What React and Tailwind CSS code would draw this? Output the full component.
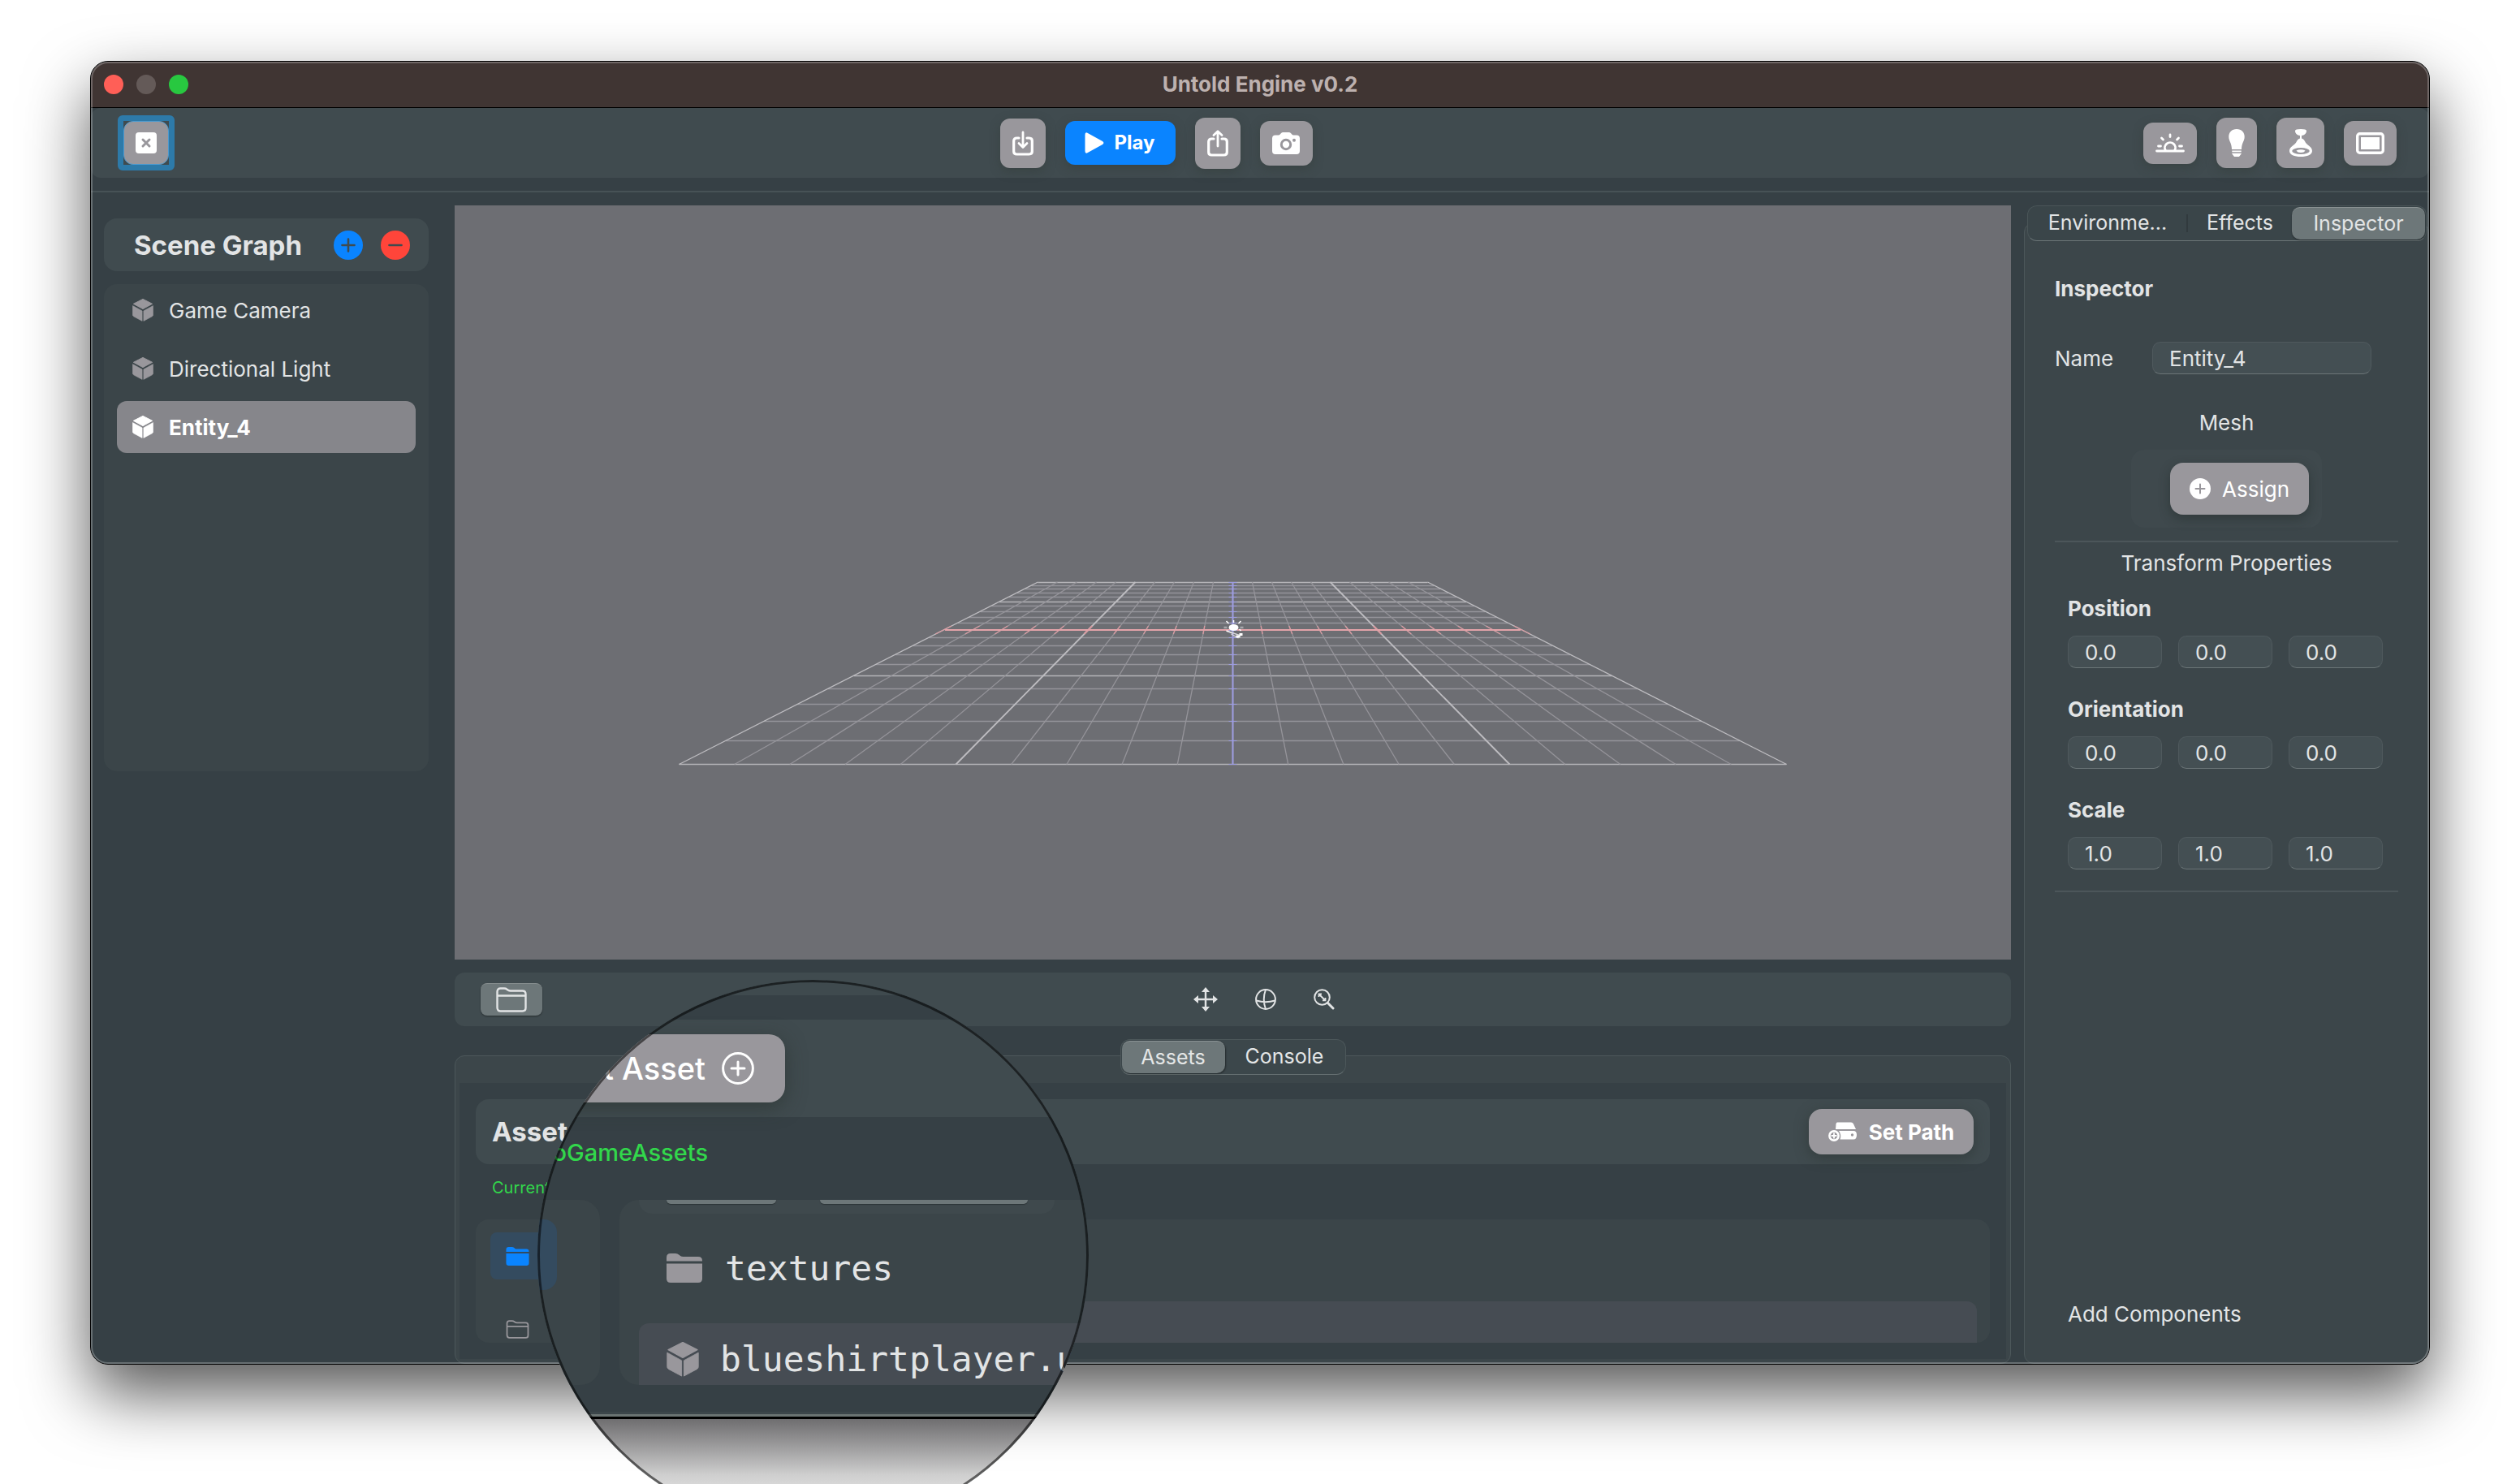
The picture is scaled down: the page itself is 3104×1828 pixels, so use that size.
import React from "react";

const GRID_ROWS = [
  464, 468, 472, 477, 482, 488, 493, 500, 507, 514, 523, 532, 542, 553, 565, 579, 595, 614, 635, 659, 688,
];

function gridHalfWidth(y) {
  return 240 + ((y - 464) / 224) * 442;
}

function Cube({ className }) {
  return (
    <svg viewBox="0 0 26 28" className={className} fill="currentColor" aria-hidden="true">
      <path d="M13 0.4 24.6 6.3 13 12.6 1.4 6.3Z" strokeWidth="1" stroke="currentColor" strokeLinejoin="round" />
      <path d="M0.5 8.6 12.1 14.9V27.4L1.6 21.8Q0.5 21.2 0.5 20Z" strokeWidth="0.6" stroke="currentColor" strokeLinejoin="round" />
      <path d="M25.5 8.6 13.9 14.9V27.4L24.4 21.8Q25.5 21.2 25.5 20Z" strokeWidth="0.6" stroke="currentColor" strokeLinejoin="round" />
    </svg>
  );
}

function FolderFill({ className }) {
  return (
    <svg viewBox="0 0 44 36" className={className} fill="currentColor" aria-hidden="true">
      <path d="M0 9.500V5Q0 0 5 0H11Q13.500 0 15.500 1.700L17 3Q18.500 4 20.500 4H39Q44 4 44 9V9.500Z" />
      <path d="M0 12.500H44V31Q44 36 39 36H5Q0 36 0 31Z" />
    </svg>
  );
}

function FolderLine({ className }) {
  return (
    <svg viewBox="0 0 38 31" className={className} fill="none" stroke="currentColor" strokeWidth="2.400" aria-hidden="true">
      <path d="M1.500 25V5.500Q1.500 1.500 5.500 1.500H10Q12 1.500 13.500 2.700L15 3.800Q16 4.500 18 4.500H32.500Q36.500 4.500 36.500 8.500V25.500Q36.500 29.500 32.500 29.500H5.500Q1.500 29.500 1.500 25Z" />
      <path d="M1.500 10.500H36.500" />
    </svg>
  );
}

function ToolButton({ label, className, children }) {
  return (
    <button
      type="button"
      aria-label={label}
      className={
        "flex items-center justify-center rounded-xl bg-[#99979c] text-white shadow-[0_4px_12px_rgba(50,60,55,0.5)] " + className
      }
    >
      {children}
    </button>
  );
}

function TopBar() {
  return (
    <div className="flex h-[86px] items-center justify-between rounded-xl bg-[#404b4f] px-10">
      <div className="mx-[-7px] rounded-md border-[7px] border-[#2d7aa9]">
        <button
          type="button"
          aria-label="Close project"
          className="flex h-[54px] w-14 items-center justify-center rounded-xl border border-[#4b9ad0] bg-[#99979c]"
        >
          <svg viewBox="0 0 26 26" className="size-[26px]" aria-hidden="true">
            <rect width="26" height="26" rx="4" fill="#fff" />
            <path d="M9 9 17 17M17 9 9 17" stroke="#99979c" strokeWidth="3" strokeLinecap="round" />
          </svg>
        </button>
      </div>

      <div className="flex items-center gap-6">
        <ToolButton label="Import" className="h-[61px] w-14">
          <svg viewBox="0 0 26 31" className="h-[31px] w-[26px]" fill="none" stroke="currentColor" strokeWidth="3.200" strokeLinecap="round" strokeLinejoin="round" aria-hidden="true">
            <path d="M8 9H5.500Q1.700 9 1.700 12.500V25.500Q1.700 29 5.500 29H20.500Q24.300 29 24.300 25.500V12.500Q24.300 9 20.500 9H18" />
            <path d="M13 2V19.500M8 15.500 13 20.500 18 15.500" strokeWidth="2.800" />
          </svg>
        </ToolButton>
        <button
          type="button"
          className="flex h-[54px] w-[136px] items-center justify-center gap-3 rounded-xl bg-[#0a84ff] text-2xl font-bold text-white shadow-[0_4px_12px_rgba(50,60,55,0.5)]"
        >
          <svg viewBox="0 0 23 26" className="h-[26px] w-[24px]" fill="currentColor" aria-hidden="true">
            <path d="M0 3Q0 -0.800 3.400 0.900L21.500 11Q24.300 13 21.500 15L3.400 25.100Q0 26.800 0 23Z" />
          </svg>
          Play
        </button>
        <ToolButton label="Export" className="h-[63px] w-14">
          <svg viewBox="0 0 26 33" className="h-[33px] w-[26px]" fill="none" stroke="currentColor" strokeWidth="3.200" strokeLinecap="round" strokeLinejoin="round" aria-hidden="true">
            <path d="M8 11H5.500Q1.700 11 1.700 14.500V27.500Q1.700 31 5.500 31H20.500Q24.300 31 24.300 27.500V14.500Q24.300 11 20.500 11H18" />
            <path d="M13 20V2.500M8 6.500 13 1.800 18 6.500" strokeWidth="2.800" />
          </svg>
        </ToolButton>
        <ToolButton label="Camera" className="h-[55px] w-[65px]">
          <svg viewBox="0 0 34 27" className="h-[27px] w-[34px]" aria-hidden="true">
            <path d="M4 3.500H7.500Q9 3.500 10 2.300L10.800 1.300Q12 0 13.500 0H20.500Q22 0 23.200 1.300L24 2.300Q25 3.500 26.500 3.500H30Q34 3.500 34 7.500V23Q34 27 30 27H4Q0 27 0 23V7.500Q0 3.500 4 3.500Z" fill="#fff" />
            <circle cx="17" cy="15" r="5.700" fill="none" stroke="#99979c" strokeWidth="3" />
            <circle cx="27" cy="9.800" r="2" fill="#99979c" />
          </svg>
        </ToolButton>
      </div>

      <div className="flex items-center gap-6">
        <ToolButton label="Directional light" className="h-[51px] w-[66px]">
          <svg viewBox="0 0 36 24" className="h-6 w-9" fill="none" stroke="currentColor" strokeWidth="2.800" strokeLinecap="round" aria-hidden="true">
            <path d="M1.500 22H34.500" />
            <path d="M12.500 21.500A6.500 6.500 0 1 1 23.500 21.500" />
            <path d="M18 2V4.500M7.500 6 9.500 8M28.500 6 26.500 8M3.500 16H6.500M29.500 16H32.500" />
          </svg>
        </ToolButton>
        <ToolButton label="Point light" className="h-[62px] w-[50px]">
          <svg viewBox="0 0 20 34" className="h-[34px] w-5" fill="currentColor" aria-hidden="true">
            <path d="M10 0C4 0 0.300 4 0.300 9.500C0.300 15 4 17 4 25H16C16 17 19.700 15 19.700 9.500C19.700 4 16 0 10 0Z" />
            <path d="M4.300 26.500H15.700V28.200H4.300ZM4.300 29.700H15.700V30.500L13 34H7L4.300 30.500Z" />
          </svg>
        </ToolButton>
        <ToolButton label="Spot light" className="h-[62px] w-[59px]">
          <svg viewBox="0 0 28 34" className="h-[34px] w-7" fill="currentColor" aria-hidden="true">
            <path d="M7 2Q7 0 14 0Q21 0 21 2C21 6 18 7.500 15 8V11.500C17 12 18 13 19 15C21 20 28 21 28 27C28 31.500 22 34 14 34C6 34 0 31.500 0 27C0 21 7 20 9 15C10 13 11 12 13 11.500V8C10 7.500 7 6 7 2Z" />
            <ellipse cx="14" cy="27" rx="10.800" ry="4" fill="#99979c" />
            <path d="M8.500 26.500Q14 24 19.500 26.500Q18 29 14 29Q10 29 8.500 26.500Z" />
          </svg>
        </ToolButton>
        <ToolButton label="Area light" className="h-[55px] w-[65px]">
          <svg viewBox="0 0 35 27" className="h-[27px] w-[35px]" aria-hidden="true">
            <rect x="1.700" y="1.700" width="31.600" height="23.600" rx="3" fill="none" stroke="#fff" strokeWidth="3.400" />
            <rect x="6" y="6" width="23" height="15" fill="#fff" />
          </svg>
        </ToolButton>
      </div>
    </div>
  );
}

function SceneGraph() {
  const entities = ["Game Camera", "Directional Light", "Entity_4"];
  return (
    <aside className="flex w-[448px] shrink-0 flex-col gap-4 pt-8 pr-8 pl-4">
      <div className="flex h-[65px] shrink-0 items-center rounded-2xl bg-[#404b4f] pr-[23px] pl-[37px]">
        <h2 className="grow text-[33px] leading-10 font-bold whitespace-nowrap text-[#e2e4e5]">Scene Graph</h2>
        <div className="flex gap-[22px]">
          <button type="button" aria-label="Add entity" className="size-9 rounded-full bg-[#0a84ff]">
            <svg viewBox="0 0 36 36" stroke="#404b4f" strokeWidth="2.600" strokeLinecap="round" aria-hidden="true">
              <path d="M10.500 18H25.500M18 10.500V25.500" />
            </svg>
          </button>
          <button type="button" aria-label="Remove entity" className="size-9 rounded-full bg-[#ff453a]">
            <svg viewBox="0 0 36 36" stroke="#404b4f" strokeWidth="2.600" strokeLinecap="round" aria-hidden="true">
              <path d="M10.500 18H25.500" />
            </svg>
          </button>
        </div>
      </div>
      <ul className="flex h-[600px] flex-col gap-2 rounded-2xl bg-[#3b4549] px-4">
        {entities.map((name) => (
          <li key={name}>
            <button
              type="button"
              className={
                name === "Entity_4"
                  ? "flex h-16 w-full items-center gap-[19px] rounded-xl bg-[#86868b] px-[19px] text-[26px] font-bold text-white"
                  : "flex h-16 w-full items-center gap-[19px] rounded-xl px-[19px] text-[26px] text-[#e2e4e5]"
              }
            >
              <Cube className={name === "Entity_4" ? "h-7 w-[26px] text-white" : "h-7 w-[26px] text-[#99979c]"} />
              {name}
            </button>
          </li>
        ))}
      </ul>
    </aside>
  );
}

function Viewport() {
  const cx = 958;
  return (
    <div className="min-h-0 grow bg-[#6d6e73]">
      <svg viewBox="0 0 1916 929" className="h-full w-full" fill="none" stroke="#98979c" strokeWidth="1.400" role="img" aria-label="Scene viewport">
        {GRID_ROWS.map((y, i) => {
          const half = gridHalfWidth(y);
          const major = i === 0 || i === 5 || i === 15 || i === 20;
          return (
            <line key={y} x1={cx - half} x2={cx + half} y1={y + 0.5} y2={y + 0.5} stroke={i === 10 ? "none" : major ? "#b5b4b8" : "#95949a"} />
          );
        })}
        {GRID_ROWS.map((_, i) => {
          const t = (i - 10) / 10;
          const edge = i === 0 || i === 20;
          const major = i === 5 || i === 15;
          return (
            <g key={i} stroke={edge || major ? "#bdbcc0" : "#95949a"} strokeWidth={major ? 1.9 : 1.3}>
              <line x1={cx + t * 240} y1="464" x2={cx + t * 682} y2="688.500" />
              {i !== 10 && (
                <line x1={cx + t * gridHalfWidth(518)} y1="518" x2={cx + t * gridHalfWidth(528)} y2="528" stroke="#d99ba1" />
              )}
            </g>
          );
        })}
        <line x1={cx - gridHalfWidth(522)} x2={cx + gridHalfWidth(522)} y1="523" y2="523" stroke="#e3a3a9" strokeWidth="2" />
        <line x1={cx} x2={cx} y1="464" y2="689" stroke="#9d9ce0" strokeWidth="2" />
        {GRID_ROWS.map((y) => (
          <line key={y} x1={cx - 5} x2={cx + 5} y1={y + 0.5} y2={y + 0.5} stroke="#9d9ce0" strokeWidth="1" />
        ))}
        <ellipse cx={cx + 1} cy="520" rx="6" ry="4" fill="#fff" stroke="none" />
        <path d="M959 514V511M953 515 950 512M965 515 968 512M950 524 958 527M968 524 966 522" stroke="#fff" strokeWidth="1.600" />
        <path d="M951 520H947M967 520H971" stroke="#a8a8ac" strokeWidth="2.400" />
        <path d="M953 525 968 530M956 528 965 533" stroke="#d9d9dc" strokeWidth="1.400" />
        <path d="M962 531H967M966 528.500H970" stroke="#fff" strokeWidth="3" />
      </svg>
    </div>
  );
}

function GizmoBar() {
  return (
    <div className="flex h-[66px] shrink-0 items-center rounded-xl bg-[#404b4f] px-8 text-[#e2e4e5]">
      <button
        type="button"
        aria-label="Assets folder"
        className="flex h-10 w-[76px] items-center justify-center rounded-lg border-t border-[#858d8e] bg-[#6d7779] shadow-[0_1px_2px_rgba(0,0,0,0.4)]"
      >
        <FolderLine className="h-[31px] w-[38px]" />
      </button>
      <div className="flex grow items-center justify-center gap-[46px]">
        <button type="button" aria-label="Move">
          <svg viewBox="0 0 30 30" className="size-[30px]" fill="currentColor" aria-hidden="true">
            <path d="M15 4V26M4 15H26" stroke="currentColor" strokeWidth="2.400" />
            <path d="M15 0 20 6H10ZM15 30 10 24H20ZM0 15 6 10V20ZM30 15 24 20V10Z" />
          </svg>
        </button>
        <button type="button" aria-label="Rotate">
          <svg viewBox="0 0 26 26" className="size-[26px]" fill="none" stroke="currentColor" strokeWidth="2" aria-hidden="true">
            <circle cx="13" cy="13" r="11.900" />
            <path d="M13 1Q8.500 13 13 25M1.500 14.500Q13 18 24.500 14.500" />
          </svg>
        </button>
        <button type="button" aria-label="Scale">
          <svg viewBox="0 0 26 26" className="size-[26px]" fill="none" stroke="currentColor" strokeWidth="2" aria-hidden="true">
            <circle cx="10.500" cy="10.500" r="9.300" />
            <path d="M17.300 17.300 24 24" strokeWidth="3" strokeLinecap="round" />
            <path d="M7.500 7.500 13.500 13.500M6.500 10V6.500H10M11 14.300H14.500V11" strokeWidth="1.800" />
          </svg>
        </button>
      </div>
    </div>
  );
}

function BottomTabs() {
  return (
    <div role="tablist" className="relative z-10 mb-[-24px] flex h-11 w-[278px] shrink-0 self-center rounded-xl border border-[#4c575a] border-b-[#667072] bg-[#3c474b] p-px text-[25px] text-[#e4e6e6]">
      <button type="button" role="tab" aria-selected="true" className="w-[127px] rounded-[10px] border-t border-[#8b9394] bg-[#6d7779] shadow-[1px_1px_2px_rgba(0,0,0,0.4)]">
        Assets
      </button>
      <button type="button" role="tab" aria-selected="false" className="grow">
        Console
      </button>
    </div>
  );
}

function AssetsPanel() {
  return (
    <section className="shrink-0 rounded-xl border border-[#4c575a] bg-[#3c464a] px-[5px] pt-[33px] pb-[5px]">
      <div className="bg-[#364045] px-5 py-5">
        <div className="flex h-20 items-center justify-between rounded-2xl bg-[#404b4f] px-5">
          <h2 className="text-[33px] leading-10 font-bold text-[#e2e4e5]">Assets</h2>
          <button
            type="button"
            className="flex h-14 w-[203px] items-center justify-center gap-[15px] rounded-2xl bg-[#99979c] text-[26px] font-bold text-white shadow-[0_4px_16px_rgba(40,50,45,0.55)]"
          >
            <svg viewBox="0 0 35 24" className="h-6 w-[35px]" fill="currentColor" aria-hidden="true">
              <path d="M11 0.500H28Q30 0.500 31 2.500L34 9H9L9.500 2.500Q10 0.500 11 0.500Z" />
              <path d="M13 11H31Q35 11 35 16Q35 21.500 31 21.500H14.500Q16.500 15.500 13 11Z" />
              <circle cx="29.500" cy="16" r="1.700" fill="#99979c" />
              <circle cx="7" cy="17" r="5.600" fill="none" stroke="currentColor" strokeWidth="2.600" />
              <path d="M7 13.500V20.500M3.500 17H10.500" stroke="currentColor" strokeWidth="1.800" />
            </svg>
            Set Path
          </button>
        </div>
        <p className="mt-[15px] px-5 text-xl leading-7 text-[#32d74b]">Current</p>
        <div className="mt-[25px] flex h-[152px] gap-4">
          <div className="w-40 overflow-hidden rounded-2xl bg-[#3b4549] px-[18px] pt-4">
            <div className="flex h-[58px] items-center rounded-lg bg-[#344b5f] px-[19px]">
              <FolderFill className="h-[23px] w-[29px] text-[#0a84ff]" />
            </div>
            <div className="mt-8 flex h-[58px] items-center px-[19px]">
              <FolderLine className="h-[23px] w-[29px] text-[#99979c]" />
            </div>
          </div>
          <div className="grow overflow-hidden rounded-2xl bg-[#3b4549] px-4 pt-[101px]">
            <div className="h-20 rounded-t-xl bg-[#464c53]" />
          </div>
        </div>
      </div>
    </section>
  );
}

function VectorField({ label, value }) {
  return (
    <fieldset className="mb-[35px] px-4">
      <legend className="leading-8 font-bold">{label}</legend>
      <div className="mt-[17px] flex gap-5">
        {["X", "Y", "Z"].map((axis) => (
          <input
            key={axis}
            aria-label={label + " " + axis}
            defaultValue={value}
            className="h-10 w-[116px] rounded-[10px] border border-[#4f595d] border-b-[#6b7577] bg-[#444f53] px-5"
          />
        ))}
      </div>
    </fieldset>
  );
}

function Inspector() {
  return (
    <aside className="ml-4 flex w-[499px] shrink-0 flex-col pt-4 text-[26px] text-[#e2e4e5]">
      <div role="tablist" className="relative z-10 mr-[3px] mb-[-23px] ml-1 flex h-11 shrink-0 items-stretch rounded-xl border border-[#4a5558] border-b-[#6b7577] bg-[#3a4549] p-px text-[25px]">
        <button type="button" role="tab" aria-selected="false" className="w-[194px] truncate">
          Environme...
        </button>
        <span className="my-[9px] w-0.5 bg-[#313a3e]" />
        <button type="button" role="tab" aria-selected="false" className="grow">
          Effects
        </button>
        <button type="button" role="tab" aria-selected="true" className="w-[164px] rounded-[10px] border-t border-[#8b9394] bg-[#6d7779] shadow-[0_1px_2px_rgba(0,0,0,0.4)]">
          Inspector
        </button>
      </div>
      <section className="flex grow flex-col rounded-xl border border-[#4c575a] bg-[#3c464a] px-[37px] pt-[65px] pb-11">
        <h2 className="leading-8 font-bold">Inspector</h2>
        <div className="mt-[49px] flex items-center">
          <label htmlFor="entity-name" className="w-[120px]">
            Name
          </label>
          <input
            id="entity-name"
            defaultValue="Entity_4"
            className="h-10 w-[270px] rounded-[10px] border border-[#4f595d] border-b-[#6b7577] bg-[#444f53] px-5"
          />
        </div>
        <p className="mt-11 text-center leading-8">Mesh</p>
        <div className="mt-[17px] self-center rounded-2xl bg-[#3f494d] py-4 pr-4 pl-12">
          <button
            type="button"
            className="flex h-16 w-[171px] items-center justify-center gap-3.5 rounded-2xl bg-[#99979c] text-white shadow-[0_5px_14px_rgba(30,40,38,0.45)]"
          >
            <svg viewBox="0 0 26 26" className="size-[26px]" aria-hidden="true">
              <circle cx="13" cy="13" r="13" fill="#fff" />
              <path d="M7.500 13H18.500M13 7.500V18.500" stroke="#99979c" strokeWidth="2" strokeLinecap="round" />
            </svg>
            Assign
          </button>
        </div>
        <hr className="mt-4 border-t-2 border-[#4c565a]" />
        <p className="mt-2.5 mb-6 text-center leading-8">Transform Properties</p>
        <VectorField label="Position" value="0.0" />
        <VectorField label="Orientation" value="0.0" />
        <VectorField label="Scale" value="1.0" />
        <hr className="mt-[-9px] border-t-2 border-[#4c565a]" />
        <button type="button" className="mt-auto self-start px-4 leading-8">
          Add Components
        </button>
      </section>
    </aside>
  );
}

function Magnifier() {
  return (
    <div className="absolute top-[1207px] left-[662px] flex size-[679px] flex-col overflow-hidden rounded-full bg-[#364045]">
      <div className="h-[19px] shrink-0 bg-[#3f4a4e]" />
      <div className="mt-[30px] flex h-[120px] shrink-0 items-center bg-[#404b4f]">
        <button
          type="button"
          className="flex h-[84px] w-[305px] items-center justify-end gap-5 rounded-[20px] bg-[#99979c] pr-[38px] text-[38px] font-medium whitespace-nowrap text-white shadow-[0_6px_24px_rgba(40,50,45,0.6)]"
        >
          Import Asset
          <svg viewBox="0 0 40 40" className="size-10 shrink-0" fill="none" stroke="currentColor" strokeWidth="3" strokeLinecap="round" aria-hidden="true">
            <circle cx="20" cy="20" r="18.400" />
            <path d="M12 20H28M20 12V28" />
          </svg>
        </button>
      </div>
      <p className="mt-6 w-[210px] shrink-0 text-right text-[29px] leading-10 font-medium whitespace-nowrap text-[#32d74b]">oGameAssets</p>
      <div className="mt-[38px] flex h-[228px] shrink-0 gap-6">
        <div className="w-[77px] shrink-0 rounded-r-3xl bg-[#3b4549] pt-6">
          <div className="h-[87px] w-6 rounded-r-2xl bg-[#344b5f]" />
        </div>
        <div className="grow overflow-hidden rounded-l-3xl bg-[#3b4549] pl-6 font-['DejaVu_Sans_Mono',monospace] text-[43px] text-[#e2e4e5]">
          <div className="flex h-[17px] w-[512px] items-start gap-[54px] rounded-b-2xl bg-[#3f494d] pl-[34px]">
            <div className="h-[5px] w-[135px] rounded-b-lg bg-[#6d7779] shadow-[0_1px_1px_#2c3437]" />
            <div className="h-[5px] w-[256px] rounded-b-lg bg-[#6d7779] shadow-[0_1px_1px_#2c3437]" />
          </div>
          <div className="mt-[23px] flex h-[88px] items-center gap-7 pl-[34px]">
            <FolderFill className="h-9 w-11 text-[#99979c]" />
            textures
          </div>
          <div className="mt-6 flex h-[88px] items-center gap-[26px] rounded-t-xl bg-[#464c53] pl-[34px]">
            <Cube className="h-[43px] w-10 shrink-0 text-[#99979c]" />
            blueshirtplayer.usdc
          </div>
        </div>
      </div>
      <div className="mt-[33px] h-[3px] shrink-0 bg-[#3c464a]" />
      <div className="h-[3px] shrink-0 bg-[#6b7473]" />
      <div className="h-[3px] shrink-0 bg-black" />
      <div className="grow bg-linear-to-b from-[#6f6e70] via-[#cfcfcf] to-white" />
      <div className="absolute inset-0 rounded-full border-[3px] border-black/55" />
    </div>
  );
}

export default function App() {
  return (
    <div className="relative flex h-screen flex-col overflow-hidden bg-white px-[111px] pt-[75px] pb-[147px] font-['Inter',sans-serif]">
      <div className="relative flex min-h-0 grow flex-col rounded-[22px] shadow-[0_36px_80px_rgba(0,0,0,0.66)]">
        <div className="flex min-h-0 grow flex-col overflow-hidden rounded-[22px] border border-black bg-[#364045]">
          <header className="grid h-[57px] shrink-0 grid-cols-[1fr_auto_1fr] items-center border-b border-black bg-[#403533]">
            <div className="flex gap-4 pl-4">
              <button type="button" aria-label="Close" className="size-6 rounded-full bg-[#ff5f57]" />
              <button type="button" aria-label="Minimize" className="size-6 rounded-full bg-[#645a58]" />
              <button type="button" aria-label="Zoom" className="size-6 rounded-full bg-[#28c840]" />
            </div>
            <h1 className="text-[26px] leading-8 font-bold text-[#bdb1af]">Untold Engine v0.2</h1>
          </header>
          <div className="shrink-0">
            <TopBar />
            <div className="mt-4 h-0.5 bg-[#475256]" />
          </div>
          <main className="flex min-h-0 grow">
            <SceneGraph />
            <div className="flex min-w-0 grow flex-col gap-4 pt-4">
              <Viewport />
              <GizmoBar />
              <div className="flex shrink-0 flex-col">
                <BottomTabs />
                <AssetsPanel />
              </div>
            </div>
            <Inspector />
          </main>
        </div>
        <div className="pointer-events-none absolute inset-px rounded-[21px] border-2 border-white/25" />
      </div>
      <Magnifier />
    </div>
  );
}
